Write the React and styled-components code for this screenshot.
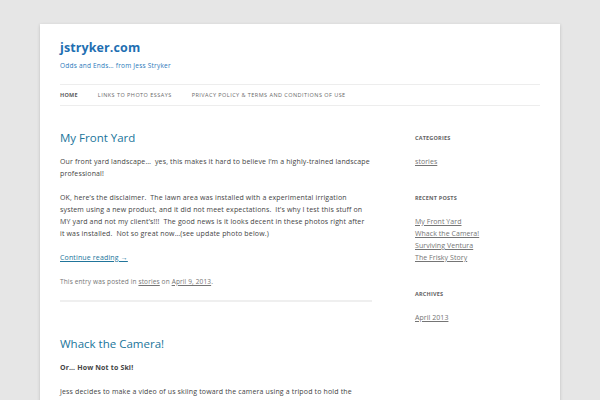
import React from 'react';
import styled, { createGlobalStyle } from 'styled-components';

const GlobalStyle = createGlobalStyle`
  html {
    background: #e6e6e6;
  }

  body {
    margin: 0;
    font-family: 'Open Sans', 'Liberation Sans', sans-serif;
    color: #444;
  }
`;

const StyledPage = styled.div`
  width: 480px;
  margin: 24px auto;
  padding: 0 20px 40px;
  background: #fff;
  box-shadow: 0 1px 3px rgba(100, 100, 100, 0.3);
`;

const StyledHeader = styled.header`
  padding-top: 16px;

  h1 {
    margin: 0;
    font-size: 12.5px;
    line-height: 16px;
    font-weight: 700;
    letter-spacing: 0.1px;

    a {
      color: #1f6fb2;
      text-decoration: none;
    }
  }

  h2 {
    margin: 4px 0 0;
    font-size: 6.5px;
    line-height: 12px;
    font-weight: 400;
    letter-spacing: 0.22px;
    color: #2a78ba;
  }
`;

const StyledNav = styled.nav`
  margin-top: 12px;
  border-top: 1px solid #ededed;
  border-bottom: 1px solid #ededed;

  ul {
    display: flex;
    gap: 20px;
    margin: 0;
    padding: 0;
    list-style: none;
  }
`;

const NavLink = styled.a`
  display: block;
  font-size: 5.5px;
  line-height: 20px;
  text-transform: uppercase;
  text-decoration: none;
  letter-spacing: ${(props) => (props.$current ? '0.25px' : '0.46px')};
  color: ${(props) => (props.$current ? '#5e5e5e' : '#6a6a6a')};
  font-weight: ${(props) => (props.$current ? 700 : 400)};
`;

const StyledMain = styled.div`
  display: grid;
  grid-template-columns: 312px 125px;
  justify-content: space-between;
  margin-top: 26px;
`;

const StyledArticle = styled.article`
  padding-bottom: 12px;
  margin-bottom: 36px;
  border-bottom: 2px solid #efefef;

  &:last-child {
    border-bottom: 0;
  }

  p {
    margin: 0 0 12px;
    font-size: 7px;
    line-height: 12px;
    letter-spacing: 0.15px;
    color: #444;
  }

  strong {
    font-weight: 700;
  }
`;

const EntryTitle = styled.h1`
  margin: 0 0 12px;
  font-size: 11.5px;
  line-height: 12px;
  font-weight: 400;

  a {
    color: #21759b;
    text-decoration: none;
  }
`;

const MoreLink = styled.a`
  color: #21759b;
  text-decoration: underline;
`;

const EntryMeta = styled.footer`
  font-size: 6.5px;
  line-height: 12px;
  letter-spacing: 0.14px;
  color: #757575;

  a {
    color: #757575;
  }
`;

const StyledWidget = styled.aside`
  margin-bottom: 24px;

  h3 {
    margin: 0 0 12px;
    font-size: 5.5px;
    line-height: 12px;
    font-weight: 700;
    letter-spacing: 0.2px;
    text-transform: uppercase;
    color: #636363;
  }

  ul {
    margin: 0;
    padding: 0;
    list-style: none;
  }

  li {
    font-size: 7px;
    line-height: 12px;
    letter-spacing: 0.05px;
  }

  a {
    color: #757575;
    text-decoration: underline;
  }
`;

const navItems = ['Home', 'Links to Photo Essays', 'Privacy Policy & Terms and Conditions of Use'];

const widgets = [
  { title: 'Categories', links: ['stories'] },
  {
    title: 'Recent Posts',
    links: ['My Front Yard', 'Whack the Camera!', 'Surviving Ventura', 'The Frisky Story'],
  },
  { title: 'Archives', links: ['April 2013'] },
];

const App = () => (
  <>
    <GlobalStyle />
    <StyledPage>
      <StyledHeader>
        <h1>
          <a href="#">jstryker.com</a>
        </h1>
        <h2>Odds and Ends… from Jess Stryker</h2>
      </StyledHeader>

      <StyledNav>
        <ul>
          {navItems.map((item, i) => (
            <li key={item}>
              <NavLink href="#" $current={i === 0}>
                {item}
              </NavLink>
            </li>
          ))}
        </ul>
      </StyledNav>

      <StyledMain>
        <div>
          <StyledArticle>
            <EntryTitle>
              <a href="#">My Front Yard</a>
            </EntryTitle>
            <p>
              Our front yard landscape…&nbsp; yes, this makes it hard to believe I’m a highly-trained
              landscape
              <br />
              professional!
            </p>
            <p>
              OK, here’s the disclaimer.&nbsp; The lawn area was installed with a experimental
              irrigation
              <br />
              system using a new product, and it did not meet expectations.&nbsp; It’s why I test
              this stuff on
              <br />
              MY yard and not my client’s!!!&nbsp; The good news is it looks decent in these photos
              right after
              <br />
              it was installed.&nbsp; Not so great now…(see update photo below.)
            </p>
            <p>
              <MoreLink href="#">Continue reading →</MoreLink>
            </p>
            <EntryMeta>
              This entry was posted in <a href="#">stories</a> on <a href="#">April 9, 2013</a>.
            </EntryMeta>
          </StyledArticle>

          <StyledArticle>
            <EntryTitle>
              <a href="#">Whack the Camera!</a>
            </EntryTitle>
            <p>
              <strong>Or… How Not to Ski!</strong>
            </p>
            <p>
              Jess decides to make a video of us skiing toward the camera using a tripod to hold the
              <br />
              camera steady.
            </p>
          </StyledArticle>
        </div>

        <div>
          {widgets.map((widget) => (
            <StyledWidget key={widget.title}>
              <h3>{widget.title}</h3>
              <ul>
                {widget.links.map((link) => (
                  <li key={link}>
                    <a href="#">{link}</a>
                  </li>
                ))}
              </ul>
            </StyledWidget>
          ))}
        </div>
      </StyledMain>
    </StyledPage>
  </>
);

export default App;
